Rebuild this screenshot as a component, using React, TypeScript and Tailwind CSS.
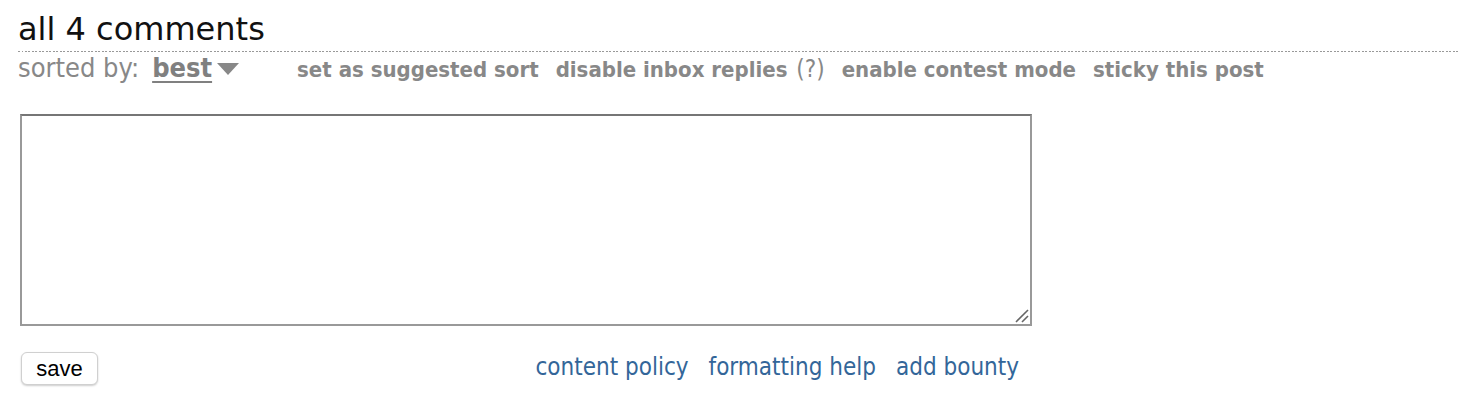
import React from "react";

export default function App() {
  return (
    <div className="w-[1460px] h-[406px] overflow-hidden bg-white font-['DejaVu_Sans','Liberation_Sans',sans-serif]">
      <div className="pl-[18px] pt-[10px]">
        <div className="text-[32px] leading-[38px] text-[#111]">all 4 comments</div>
        <div className="mt-[3px] h-px w-full bg-[repeating-linear-gradient(90deg,#999_0_1.75px,transparent_1.75px_3.5px)]" />
        <div className="mt-[1px] h-[30px] flex items-baseline font-['DejaVu_Sans_Condensed','DejaVu_Sans',sans-serif] [font-stretch:condensed] text-[#888]">
          <span className="text-[27px] leading-[30px]">sorted by:</span>
          <span className="ml-[13px] text-[27px] leading-[30px] font-bold text-[#808080] underline decoration-2 underline-offset-[4px]">
            best
          </span>
          <svg className="ml-[5px] self-center mt-[2px]" width="22" height="12" viewBox="0 0 22 12">
            <polygon points="0,0 22,0 11,12" fill="#888" />
          </svg>
          <div className="ml-[58px] flex items-baseline gap-[17px] text-[22px] leading-[26px] font-bold">
            <span>set as suggested sort</span>
            <span>
              disable inbox replies <span className="ml-[2px] text-[24px] leading-none font-normal">(?)</span>
            </span>
            <span>enable contest mode</span>
            <span>sticky this post</span>
          </div>
        </div>
      </div>

      <div className="ml-[20px] mt-[31px] w-[1012px]">
        <div className="relative">
          <textarea className="block w-[1012px] h-[212px] resize-none border-2 border-[#999] border-t-[#767676] bg-white outline-none" />
          <svg className="absolute right-[3px] bottom-[3px]" width="14" height="14" viewBox="0 0 14 14">
            <line x1="1" y1="13" x2="13" y2="1" stroke="#666" strokeWidth="1.6" />
            <line x1="7" y1="13" x2="13" y2="7" stroke="#666" strokeWidth="1.6" />
          </svg>
        </div>
        <div className="mt-[26px] flex items-start justify-between">
          <button className="ml-px h-[33px] w-[77px] rounded-[6px] border border-[#d0d0d0] bg-white font-['Liberation_Sans',Arial,sans-serif] text-[22px] leading-[28px] text-black shadow-[0_1px_2px_rgba(0,0,0,0.2)]">
            save
          </button>
          <div className="mr-[13px] flex gap-[20px] font-['DejaVu_Sans_Condensed','DejaVu_Sans',sans-serif] [font-stretch:condensed] text-[24px] leading-[30px] text-[#369]">
            <span>content policy</span>
            <span>formatting help</span>
            <span>add bounty</span>
          </div>
        </div>
      </div>
    </div>
  );
}
